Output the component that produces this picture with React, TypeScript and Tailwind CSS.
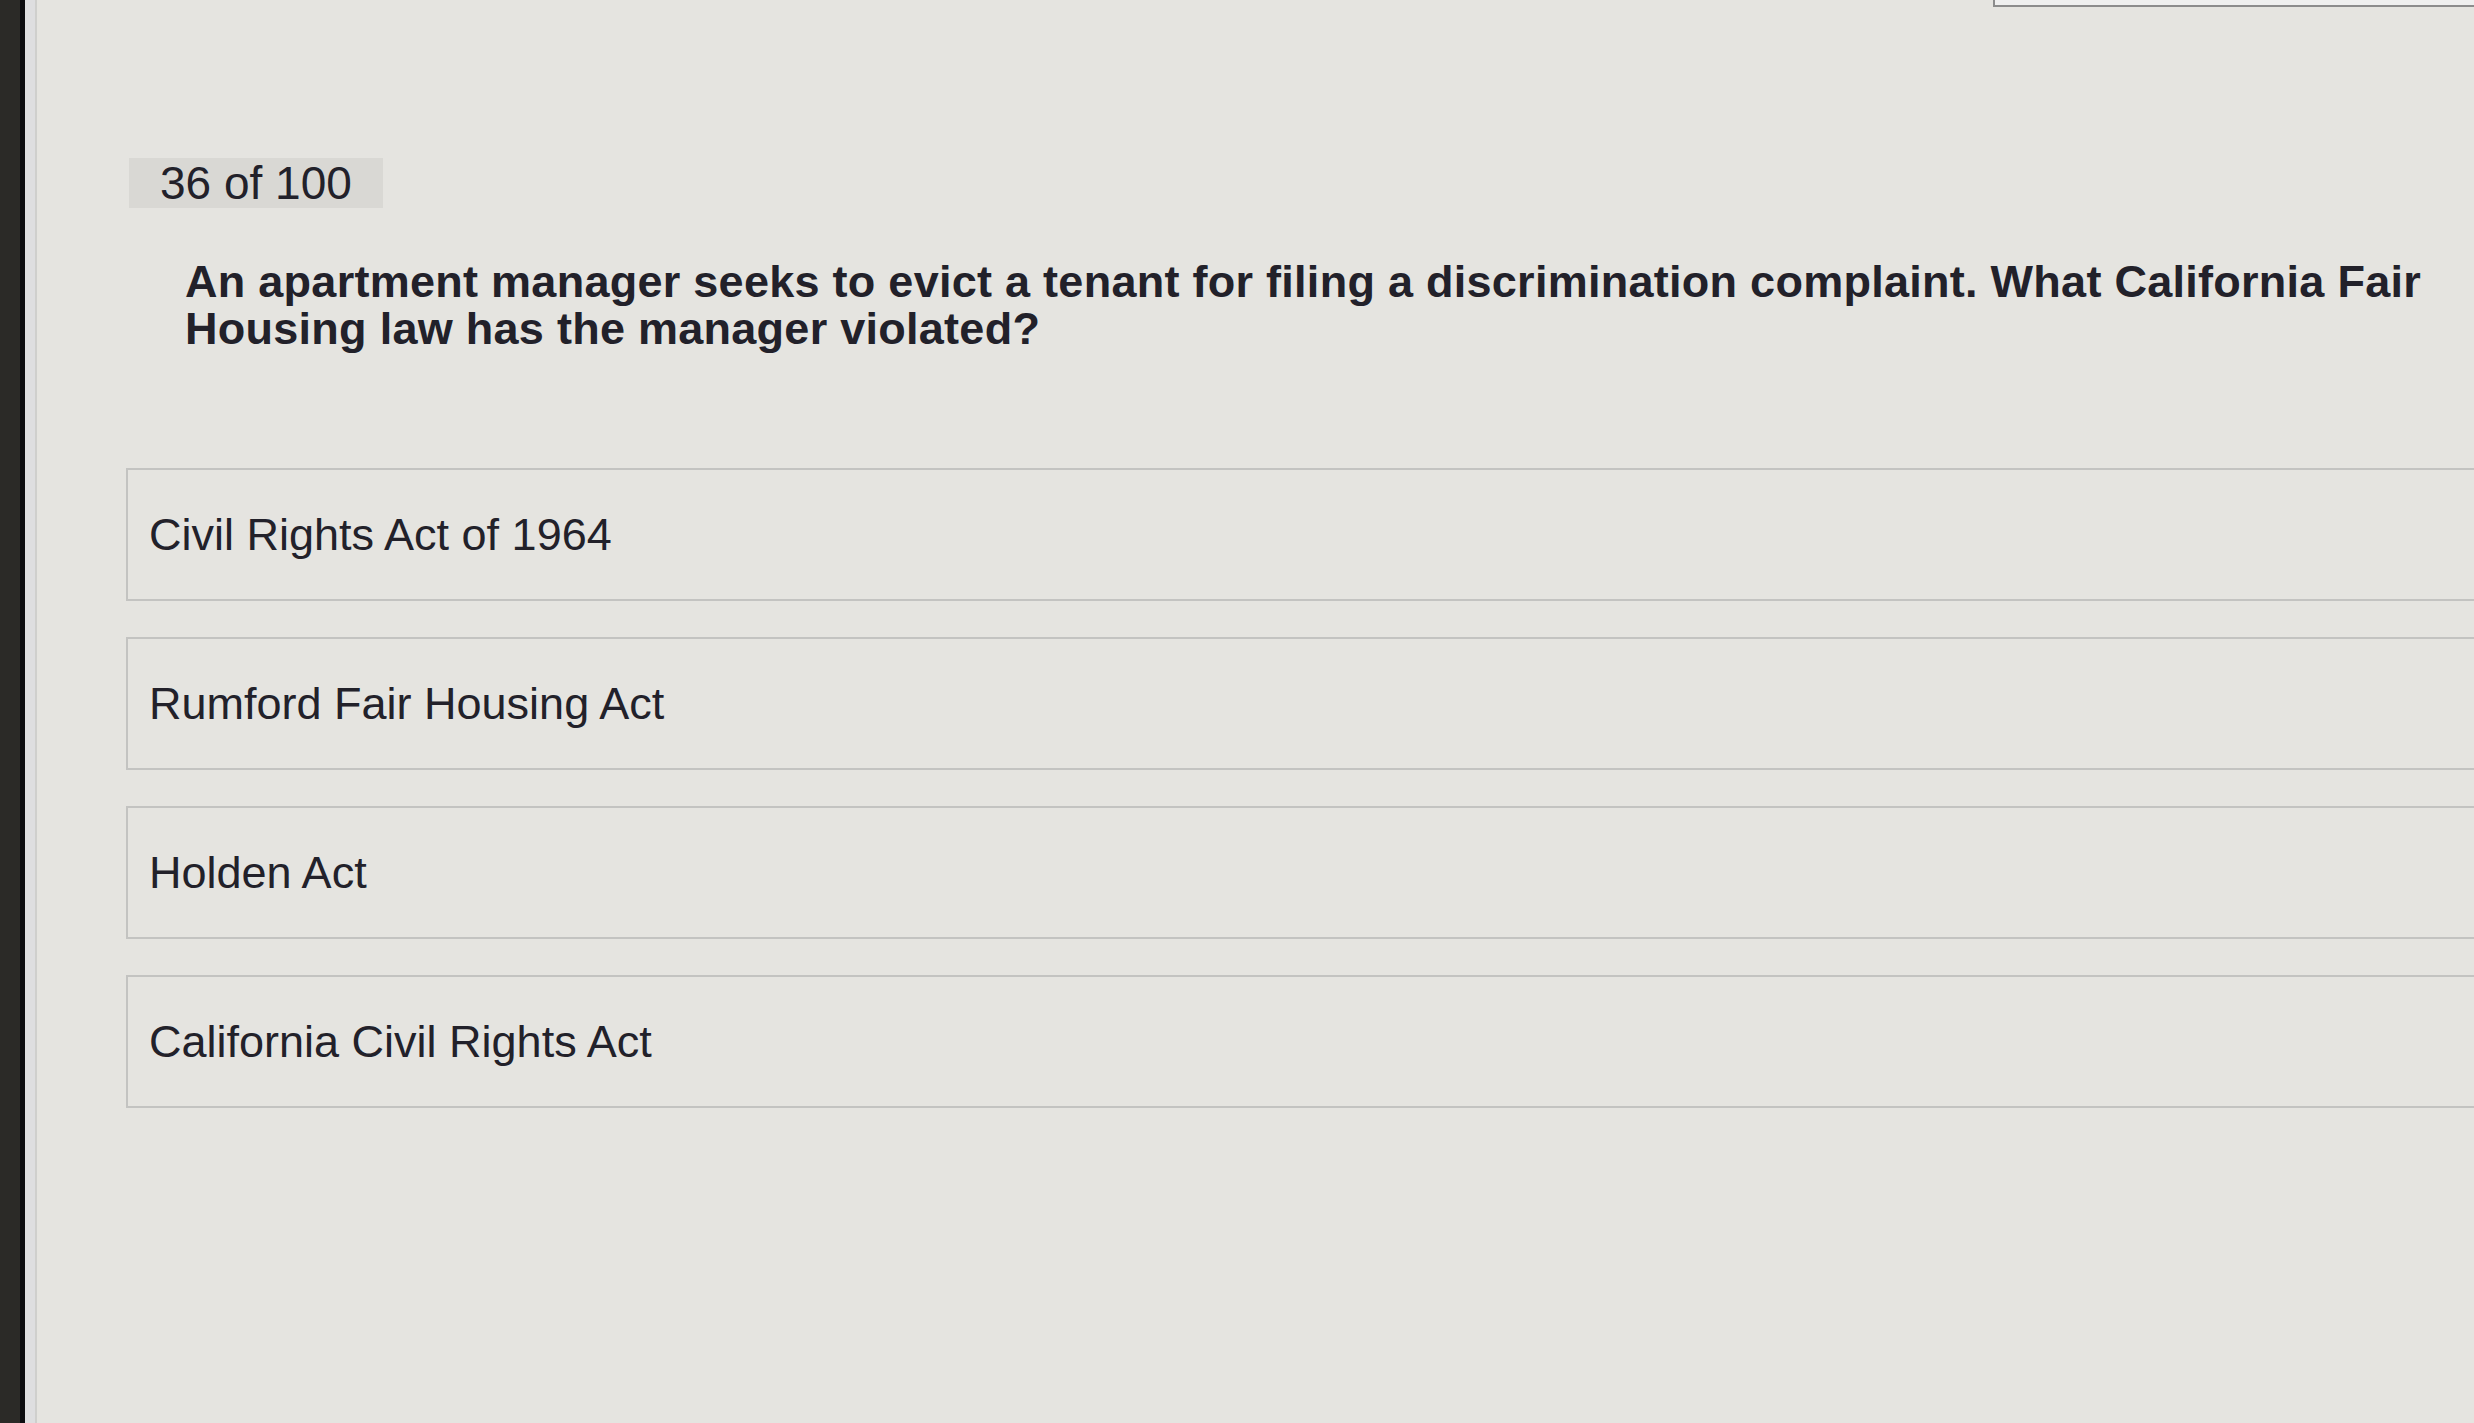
import React from "react";

const options = [
  "Civil Rights Act of 1964",
  "Rumford Fair Housing Act",
  "Holden Act",
  "California Civil Rights Act",
];

export default function App() {
  return (
    <div
      className="flex h-[1423px] w-[2474px] overflow-hidden bg-[#e5e4e0] text-[#22212a]"
      style={{ fontFamily: '"Liberation Sans", Arial, Helvetica, sans-serif' }}
    >
      {/* monitor bezel */}
      <div className="h-full w-[20px] shrink-0 bg-[#2b2a27]" />
      <div className="h-full w-[5px] shrink-0 bg-[#0c0c10]" />
      <div className="h-full w-[12px] shrink-0 border-r-2 border-[#cfcfcd] bg-[#dedee0]" />

      <main className="flex min-w-0 flex-1 flex-col">
        <div className="flex justify-end">
          <div className="h-[7px] w-[481px] border-b-2 border-l-2 border-[#8c8c8c] bg-[#efefef]" />
        </div>

        <div className="ml-[92px] mt-[151px] flex h-[50px] w-fit items-center bg-[#d9d8d4] px-[31px] text-[46px] leading-[50px]">
          36 of 100
        </div>

        <p className="ml-[148px] mt-[50px] w-[2290px] text-[45px] font-bold leading-[47px] tracking-[0.006em]">
          An apartment manager seeks to evict a tenant for filing a discrimination complaint. What California Fair Housing law has the manager violated?
        </p>

        <div className="ml-[89px] mt-[116px] flex flex-col gap-[36px]">
          {options.map((o) => (
            <div
              key={o}
              className="-mr-[10px] flex h-[133px] items-center border-2 border-r-0 border-[#c3c3c1] pl-[21px] text-[45px] leading-none"
            >
              {o}
            </div>
          ))}
        </div>
      </main>
    </div>
  );
}
